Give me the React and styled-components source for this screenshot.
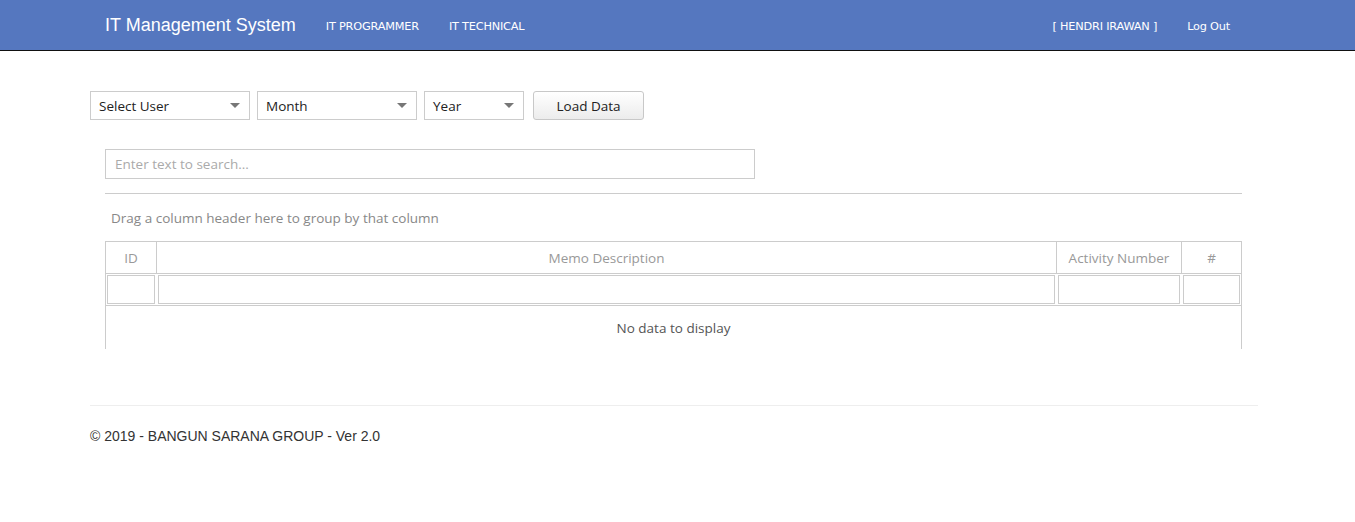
import React from 'react';
import styled, { createGlobalStyle } from 'styled-components';

const GlobalStyle = createGlobalStyle`
  html, body { margin: 0; padding: 0; background: #fff; }
  body { font-family: "Liberation Sans", Arial, sans-serif; font-size: 14px; color: #333; }
  * { box-sizing: border-box; }
`;

const ui = `"Open Sans", "Noto Sans", sans-serif`;

const Navbar = styled.header`
  height: 51px;
  background: #5577bf;
  border-bottom: 1px solid #111;
`;

const NavInner = styled.div`
  width: 1175px;
  margin: 0 auto;
  height: 50px;
  display: flex;
  align-items: center;
  padding-left: 15px;
`;

const Brand = styled.div`
  font-size: 18px;
  color: #fff;
  margin-right: 30px;
`;

const NavLink = styled.a`
  font-family: "DejaVu Sans", sans-serif;
  font-size: 11.3px;
  color: #fff;
  margin-right: ${p => p.$mr ?? 30}px;
  padding-top: 2px;
  text-decoration: none;
  letter-spacing: -0.2px;
`;

const Spacer = styled.div`flex: 1;`;

const Main = styled.main`
  width: 1175px;
  margin: 0 auto;
  padding: 40px 7px 0 0;
`;

const Toolbar = styled.div`
  display: flex;
  gap: 7px;
  align-items: center;
`;

const Select = styled.div`
  width: ${p => p.$w}px;
  height: 29px;
  border: 1px solid #ccc;
  display: flex;
  align-items: center;
  justify-content: space-between;
  padding: 0 9px 0 8px;
  font-family: ${ui};
  font-size: 13.5px;
  color: #222;
`;

const Caret = styled.span`
  width: 0;
  height: 0;
  border-left: 5px solid transparent;
  border-right: 5px solid transparent;
  border-top: 5px solid #777;
`;

const Button = styled.button`
  margin-left: 2px;
  width: 111px;
  height: 29px;
  border: 1px solid #c8c8c8;
  border-radius: 3px;
  background: linear-gradient(#fff, #ececec);
  font-family: ${ui};
  font-size: 13.5px;
  color: #222;
  padding: 0;
`;

const Grid = styled.section`
  margin: 29px 0 0 15px;
  width: 1137px;
`;

const Search = styled.div`
  width: 650px;
  height: 30px;
  border: 1px solid #ccc;
  padding: 0 9px;
  display: flex;
  align-items: center;
  font-family: ${ui};
  font-size: 13.5px;
  color: #aaa;
`;

const Divider = styled.div`
  margin-top: 14px;
  border-top: 1px solid #ccc;
`;

const GroupPanel = styled.div`
  height: 47px;
  padding-left: 6px;
  display: flex;
  align-items: center;
  font-family: ${ui};
  font-size: 13.5px;
  color: #888;
`;

const Table = styled.div`
  border: 1px solid #ccc;
  border-bottom: none;
`;

const Row = styled.div`
  display: grid;
  grid-template-columns: 50px 900px 125px 1fr;
  border-bottom: 1px solid #ccc;
`;

const HeadCell = styled.div`
  height: 31px;
  display: flex;
  align-items: center;
  justify-content: center;
  font-family: ${ui};
  font-size: 13.5px;
  color: #999;
  & + & { border-left: 1px solid #ccc; }
`;

const FilterCell = styled.div`
  height: 31px;
  padding: 1px;
  & + & { padding-left: 2px; }
`;

const FilterBox = styled.div`
  height: 100%;
  border: 1px solid #ccc;
`;

const Empty = styled.div`
  height: 43px;
  display: flex;
  align-items: center;
  justify-content: center;
  font-family: ${ui};
  font-size: 13.5px;
  color: #555;
`;

const Footer = styled.footer`
  margin-top: 56px;
  border-top: 1px solid #eee;
  padding-top: 22px;
  font-size: 14px;
  color: #333;
`;

const columns = ['ID', 'Memo Description', 'Activity Number', '#'];

export default function App() {
  return (
    <>
      <GlobalStyle />
      <Navbar>
        <NavInner>
          <Brand>IT Management System</Brand>
          <NavLink>IT PROGRAMMER</NavLink>
          <NavLink>IT TECHNICAL</NavLink>
          <Spacer />
          <NavLink>[ HENDRI IRAWAN ]</NavLink>
          <NavLink $mr={35}>Log Out</NavLink>
        </NavInner>
      </Navbar>
      <Main>
        <Toolbar>
          <Select $w={160}>Select User<Caret /></Select>
          <Select $w={160}>Month<Caret /></Select>
          <Select $w={100}>Year<Caret /></Select>
          <Button>Load Data</Button>
        </Toolbar>
        <Grid>
          <Search>Enter text to search...</Search>
          <Divider />
          <GroupPanel>Drag a column header here to group by that column</GroupPanel>
          <Table>
            <Row>
              {columns.map(c => <HeadCell key={c}>{c}</HeadCell>)}
            </Row>
            <Row>
              {columns.map(c => <FilterCell key={c}><FilterBox /></FilterCell>)}
            </Row>
            <Empty>No data to display</Empty>
          </Table>
        </Grid>
        <Footer>© 2019 - BANGUN SARANA GROUP - Ver 2.0</Footer>
      </Main>
    </>
  );
}
